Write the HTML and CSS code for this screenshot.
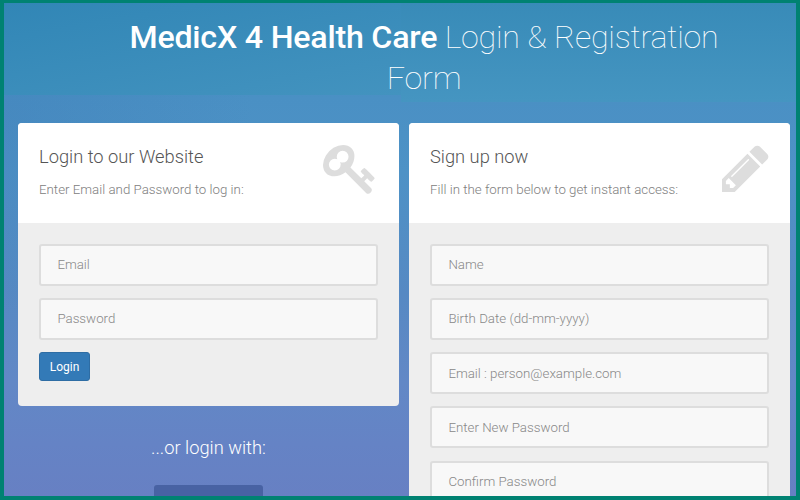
FILE: index.html
```
<!DOCTYPE html>
<html lang="en">
<head>
<meta charset="utf-8">
<title>MedicX 4 Health Care</title>
<link rel="stylesheet" href="styles.css">
</head>
<body>
<main class="page">
  <h1 class="title"><strong>MedicX 4 Health Care</strong> Login &amp; Registration Form</h1>
  <div class="columns">
    <div class="column">
      <section class="card">
        <header class="card-top">
          <div>
            <h2>Login to our Website</h2>
            <p>Enter Email and Password to log in:</p>
          </div>
          <svg class="icon icon-key" viewBox="0 0 1792 1792"><path d="M832 512q0-80-56-136t-136-56-136 56-56 136q0 42 19 83-41-19-83-19-80 0-136 56t-56 136 56 136 136 56 136-56 56-136q0-42-19-83 41 19 83 19 80 0 136-56t56-136zm851 704q0 17-49 66t-66 49q-9 0-28.500-16t-36.500-33-38.500-40-24.500-26l-96 96 220 220q28 28 28 68 0 42-39 81t-81 39q-40 0-68-28l-671-671q-176 131-365 131-163 0-265.500-102.500t-102.500-265.500q0-160 95-313t248-248 313-95q163 0 265.500 102.500t102.500 265.500q0 189-131 365l355 355 96-96q-3-3-26-24.500t-40-38.500-33-36.500-16-28.500q0-17 49-66t66-49q13 0 23 10 6 6 46 44.500t82 79.500 86.500 86 73 78 28.500 41z"/></svg>
        </header>
        <form class="card-body">
          <input type="text" placeholder="Email">
          <input type="password" placeholder="Password">
          <button type="button" class="btn">Login</button>
        </form>
      </section>
      <div class="social">
        <h3>...or login with:</h3>
        <div class="social-btn"></div>
      </div>
    </div>
    <div class="column">
      <section class="card">
        <header class="card-top">
          <div>
            <h2>Sign up now</h2>
            <p>Fill in the form below to get instant access:</p>
          </div>
          <svg class="icon icon-pencil" viewBox="128 0 1536 1792"><path d="M491 1536l91-91-235-235-91 91v107h128v128h107zm523-928q0-22-22-22-10 0-17 7l-542 542q-7 7-7 17 0 22 22 22 10 0 17-7l542-542q7-7 7-17zm-54-192l416 416-832 832h-416v-416zm683 96q0 53-37 90l-166 166-416-416 166-165q36-38 90-38 53 0 91 38l235 234q37 39 37 91z"/></svg>
        </header>
        <form class="card-body">
          <input type="text" placeholder="Name">
          <input type="text" placeholder="Birth Date (dd-mm-yyyy)">
          <input type="text" placeholder="Email : person@example.com">
          <input type="password" placeholder="Enter New Password">
          <input type="password" placeholder="Confirm Password">
        </form>
      </section>
    </div>
  </div>
</main>
</body>
</html>
```
FILE: styles.css
```
* { box-sizing: border-box; }

body {
  margin: 0;
  font-family: Roboto, "Liberation Sans", sans-serif;
  font-weight: 300;
  color: #808080;
}

.page {
  height: 500px;
  overflow: hidden;
  border: 4px solid #008272;
  border-top-width: 3px;
  padding: 14px 6px 0 14px;
  background:
    linear-gradient(170deg, #3186b6, #4393bf) 0 0 / 397px 92px no-repeat,
    linear-gradient(#388bb8, #4595c1) 397px 0 / 395px 99px no-repeat,
    radial-gradient(250px 200px at 0 110px, rgba(60, 120, 180, 0.3), rgba(60, 120, 180, 0)),
    linear-gradient(#3588b6 0, #4a90c4 95px, #4e92c6 170px, #5689c3 290px, #6288c6 380px, #6583c5 440px, #6780c3 493px);
}

.title {
  margin: 0 0 0 96px;
  width: 620px;
  text-align: center;
  font-size: 32.2px;
  letter-spacing: -0.22px;
  font-weight: 100;
  line-height: 41px;
  color: #fff;
}

.title strong { font-weight: 500; }

.columns {
  display: grid;
  grid-template-columns: 381px 381px;
  gap: 10px;
  margin-top: 24px;
}

.card {
  border-radius: 4px;
  overflow: hidden;
  background: #eee;
}

.card-top {
  display: flex;
  justify-content: space-between;
  height: 100px;
  padding: 18px 21px 0;
  background: #fff;
}

.card-top h2 {
  margin: 5px 0 0;
  font-size: 18.3px;
  font-weight: 300;
  line-height: 22px;
  color: #555;
}

.card-top p {
  margin: 11px 0 0;
  font-size: 13.3px;
  line-height: 22px;
}

.icon { height: 55px; fill: #ddd; }
.icon-key { width: 55px; }
.icon-pencil { width: 47px; }

.card-body {
  display: flex;
  flex-direction: column;
  gap: 12.12px;
  padding: 21.1px 21px 24.7px;
}

input {
  width: 100%;
  height: 42px;
  padding: 0 16.4px 0.54px;
  border: 2px solid #ddd;
  border-radius: 3px;
  background: #f8f8f8;
  font: 300 13.3px Roboto, "Liberation Sans", sans-serif;
}

input::placeholder { color: #888; }

.btn {
  align-self: flex-start;
  width: 51px;
  height: 29px;
  padding: 0;
  border: 1px solid #2e6da4;
  border-radius: 3px;
  background: #337ab7;
  color: #fff;
  font: 400 12px Roboto, "Liberation Sans", sans-serif;
}

.social {
  display: flex;
  flex-direction: column;
  align-items: center;
  padding-top: 30px;
}

.social h3 {
  margin: 0;
  font-size: 18.3px;
  font-weight: 300;
  line-height: 24px;
  color: #fff;
}

.social-btn {
  width: 109px;
  height: 36px;
  margin-top: 25px;
  border-radius: 3px;
  background: #4862a3;
}
```
